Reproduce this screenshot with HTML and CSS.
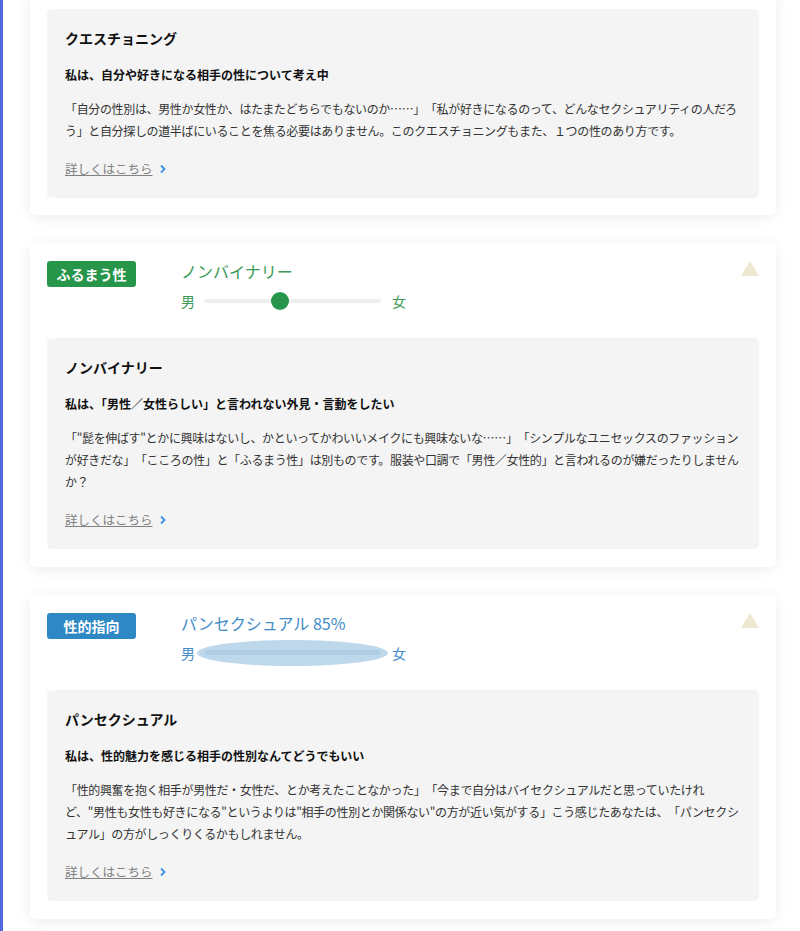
FILE: index.html
```html
<!DOCTYPE html>
<html lang="ja">
<head>
<meta charset="utf-8">
<link rel="stylesheet" href="styles.css">
</head>
<body>
<div class="page">
  <section class="card card--cut">
    <div class="detail">
      <h3 class="detail-title">クエスチョニング</h3>
      <p class="detail-lead">私は、自分や好きになる相手の性について考え中</p>
      <p class="detail-text">「自分の性別は、男性か女性か、はたまたどちらでもないのか……」「私が好きになるのって、どんなセクシュアリティの人だろう」と自分探しの道半ばにいることを焦る必要はありません。このクエスチョニングもまた、１つの性のあり方です。</p>
      <a class="more" href="#"><span class="more-text">詳しくはこちら</span><svg class="chev" width="8" height="10" viewBox="0 0 8 10"><path d="M2 1.5 L5.5 5 L2 8.5" fill="none" stroke="#3b8fdc" stroke-width="1.8"/></svg></a>
    </div>
  </section>

  <section class="card">
    <div class="head">
      <span class="badge badge--green">ふるまう性</span>
      <div class="result">
        <div class="result-title result-title--green">ノンバイナリー</div>
        <div class="scale scale--green">
          <span class="scale-label">男</span>
          <div class="track"><span class="knob" style="left:43%"></span></div>
          <span class="scale-label">女</span>
        </div>
      </div>
      <span class="toggle"></span>
    </div>
    <div class="detail">
      <h3 class="detail-title">ノンバイナリー</h3>
      <p class="detail-lead">私は、「男性／女性らしい」と言われない外見・言動をしたい</p>
      <p class="detail-text">「"髭を伸ばす"とかに興味はないし、かといってかわいいメイクにも興味ないな……」「シンプルなユニセックスのファッションが好きだな」「こころの性」と「ふるまう性」は別ものです。服装や口調で「男性／女性的」と言われるのが嫌だったりしませんか？</p>
      <a class="more" href="#"><span class="more-text">詳しくはこちら</span><svg class="chev" width="8" height="10" viewBox="0 0 8 10"><path d="M2 1.5 L5.5 5 L2 8.5" fill="none" stroke="#3b8fdc" stroke-width="1.8"/></svg></a>
    </div>
  </section>

  <section class="card">
    <div class="head">
      <span class="badge badge--blue">性的指向</span>
      <div class="result">
        <div class="result-title result-title--blue">パンセクシュアル 85%</div>
        <div class="scale scale--blue">
          <span class="scale-label">男</span>
          <div class="track"><span class="blob"></span></div>
          <span class="scale-label">女</span>
        </div>
      </div>
      <span class="toggle"></span>
    </div>
    <div class="detail">
      <h3 class="detail-title">パンセクシュアル</h3>
      <p class="detail-lead">私は、性的魅力を感じる相手の性別なんてどうでもいい</p>
      <p class="detail-text">「性的興奮を抱く相手が男性だ・女性だ、とか考えたことなかった」「今まで自分はバイセクシュアルだと思っていたけれど、"男性も女性も好きになる"というよりは"相手の性別とか関係ない"の方が近い気がする」こう感じたあなたは、「パンセクシュアル」の方がしっくりくるかもしれません。</p>
      <a class="more" href="#"><span class="more-text">詳しくはこちら</span><svg class="chev" width="8" height="10" viewBox="0 0 8 10"><path d="M2 1.5 L5.5 5 L2 8.5" fill="none" stroke="#3b8fdc" stroke-width="1.8"/></svg></a>
    </div>
  </section>
</div>
</body>
</html>
```

FILE: styles.css
```css
* { box-sizing: border-box; }
html, body { margin: 0; padding: 0; background: #fff; }
body {
  font-family: "Noto Sans CJK JP", "Noto Sans", "Liberation Sans", sans-serif;
  color: #222;
  overflow: hidden;
}
.page {
  border-left: 3px solid #5068dc;
  padding: 0 24px 40px 27px;
  min-height: 931px;
  display: flex;
  flex-direction: column;
  gap: 28px;
}
.card {
  background: #fff;
  border-radius: 6px;
  box-shadow: 0 2px 14px rgba(0, 0, 0, 0.08);
  padding: 18px 17px 18px 17px;
}
.card--cut {
  margin-top: -8px;
  padding-top: 17px;
  padding-bottom: 17px;
}
.head {
  display: flex;
  align-items: flex-start;
  margin-bottom: 27px;
}
.badge {
  width: 89px;
  height: 26px;
  border-radius: 3px;
  color: #fff;
  font-size: 14px;
  font-weight: 700;
  line-height: 26px;
  text-align: center;
  flex: none;
}
.badge--green { background: #27964a; }
.badge--blue { background: #2e88c4; }
.result {
  margin-left: 45px;
  flex: 1;
  margin-top: -1px;
}
.result-title {
  font-size: 16px;
  line-height: 22px;
  font-weight: 400;
}
.result-title--green { color: #3a9a55; }
.result-title--blue { color: #3f8cc8; }
.scale {
  display: flex;
  align-items: center;
  margin-top: 9px;
  height: 20px;
  width: 226px;
}
.scale--green { color: #3a9a55; }
.scale--blue { color: #3f8cc8; }
.scale-label {
  font-size: 14px;
  line-height: 20px;
  width: 14px;
  flex: none;
}
.track {
  position: relative;
  flex: none;
  width: 177px;
  height: 4px;
  margin: 0 11px 0 9px;
  background: #efefef;
  border-radius: 2px;
}
.knob {
  position: absolute;
  top: 50%;
  width: 18px;
  height: 18px;
  margin: -9px 0 0 -9px;
  border-radius: 50%;
  background: #27964a;
}
.blob {
  position: absolute;
  left: -7px;
  right: -7px;
  top: -11px;
  bottom: -11px;
  border-radius: 50%;
  background: #bcd8ea;
}
.blob::after {
  content: "";
  position: absolute;
  left: 8px;
  right: 8px;
  top: 10px;
  height: 5px;
  background: #aecde2;
  border-radius: 3px;
}
.toggle {
  margin-left: auto;
  width: 0;
  height: 0;
  border-left: 9px solid transparent;
  border-right: 9px solid transparent;
  border-bottom: 15px solid #ede8d2;
  flex: none;
}
.detail {
  background: #f4f4f4;
  border-radius: 5px;
  padding: 20px 18px 19px 18px;
}
.detail-title {
  margin: 0;
  font-size: 14px;
  line-height: 18px;
  font-weight: 700;
  color: #111;
}
.detail-lead {
  margin: 19px 0 0;
  font-size: 12px;
  line-height: 18px;
  font-weight: 700;
  color: #111;
}
.detail-text {
  margin: 14px 0 0;
  font-size: 12px;
  line-height: 22px;
  color: #333;
  letter-spacing: -0.35px;
  text-spacing-trim: space-all;
}
.more {
  display: inline-flex;
  align-items: center;
  gap: 6px;
  margin-top: 18px;
  font-size: 12.5px;
  line-height: 18px;
  color: #808080;
  text-decoration: none;
}
.more-text { text-decoration: underline; }
.chev { display: block; }
```
